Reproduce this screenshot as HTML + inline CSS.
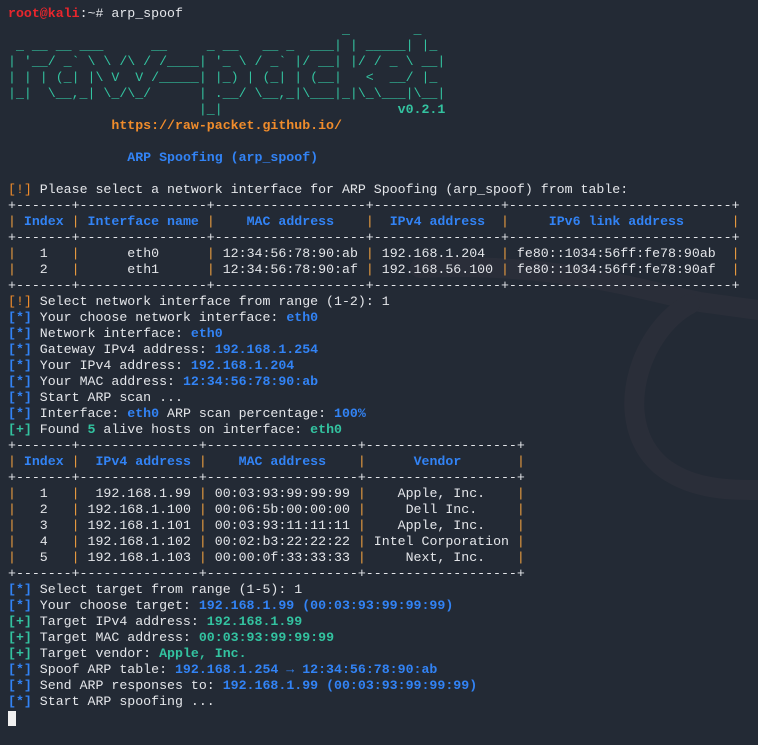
<!DOCTYPE html>
<html><head><meta charset="utf-8"><style>
html,body{margin:0;padding:0;background:#232a35;width:758px;height:745px;overflow:hidden}
svg.bg{position:absolute;left:0;top:0}
pre{position:absolute;left:8px;top:6px;margin:0;font-family:"Liberation Mono",monospace;font-size:13.25px;line-height:16px;color:#e4e6ea;white-space:pre}
.r{color:#e8262d;font-weight:bold}
.b{color:#3283f5;font-weight:bold}
.g{color:#33c3a0;font-weight:bold}
.t{color:#33c3a0}
.o{color:#f08c2b;font-weight:bold}
.ob{color:#f08c2b}
.p{color:#f0a040}
.cur{position:absolute;left:8px;top:711px;width:8px;height:15px;background:#f0f0f0}
</style></head><body>
<svg class="bg" width="758" height="745"><g fill="none" stroke="#2a2e39" stroke-width="20" stroke-linecap="round">
<path d="M 420 268 C 560 262, 640 290, 700 302 L 758 310"/>
<path d="M 690 304 C 640 330, 610 420, 660 465 C 690 490, 730 490, 758 490"/>
</g></svg>
<pre><span class="r">root@kali</span>:~# arp_spoof
<span class="t">                                          _        _
 _ __ __ ___      __     _ __   __ _  ___| | _____| |_
| '__/ _` \ \ /\ / /____| '_ \ / _` |/ __| |/ / _ \ __|
| | | (_| |\ V  V /_____| |_) | (_| | (__|   &lt;  __/ |_
|_|  \__,_| \_/\_/      | .__/ \__,_|\___|_|\_\___|\__|
                        |_|                      </span><span class="g">v0.2.1</span>
             <span class="o">https://raw-packet.github.io/</span>

               <span class="b">ARP Spoofing (arp_spoof)</span>

<span class="ob">[!]</span> Please select a network interface for ARP Spoofing (arp_spoof) from table:
+-------+----------------+-------------------+----------------+----------------------------+
<span class="p">|</span> <span class="b">Index</span> <span class="p">|</span> <span class="b">Interface name</span> <span class="p">|</span>    <span class="b">MAC address</span>    <span class="p">|</span>  <span class="b">IPv4 address</span>  <span class="p">|</span>     <span class="b">IPv6 link address</span>      <span class="p">|</span>
+-------+----------------+-------------------+----------------+----------------------------+
<span class="p">|</span>   1   <span class="p">|</span>      eth0      <span class="p">|</span> 12:34:56:78:90:ab <span class="p">|</span> 192.168.1.204  <span class="p">|</span> fe80::1034:56ff:fe78:90ab  <span class="p">|</span>
<span class="p">|</span>   2   <span class="p">|</span>      eth1      <span class="p">|</span> 12:34:56:78:90:af <span class="p">|</span> 192.168.56.100 <span class="p">|</span> fe80::1034:56ff:fe78:90af  <span class="p">|</span>
+-------+----------------+-------------------+----------------+----------------------------+
<span class="ob">[!]</span> Select network interface from range (1-2): 1
<span class="b">[*]</span> Your choose network interface: <span class="b">eth0</span>
<span class="b">[*]</span> Network interface: <span class="b">eth0</span>
<span class="b">[*]</span> Gateway IPv4 address: <span class="b">192.168.1.254</span>
<span class="b">[*]</span> Your IPv4 address: <span class="b">192.168.1.204</span>
<span class="b">[*]</span> Your MAC address: <span class="b">12:34:56:78:90:ab</span>
<span class="b">[*]</span> Start ARP scan ...
<span class="b">[*]</span> Interface: <span class="b">eth0</span> ARP scan percentage: <span class="b">100%</span>
<span class="g">[+]</span> Found <span class="g">5</span> alive hosts on interface: <span class="g">eth0</span>
+-------+---------------+-------------------+-------------------+
<span class="p">|</span> <span class="b">Index</span> <span class="p">|</span>  <span class="b">IPv4 address</span> <span class="p">|</span>    <span class="b">MAC address</span>    <span class="p">|</span>      <span class="b">Vendor</span>       <span class="p">|</span>
+-------+---------------+-------------------+-------------------+
<span class="p">|</span>   1   <span class="p">|</span>  192.168.1.99 <span class="p">|</span> 00:03:93:99:99:99 <span class="p">|</span>    Apple, Inc.    <span class="p">|</span>
<span class="p">|</span>   2   <span class="p">|</span> 192.168.1.100 <span class="p">|</span> 00:06:5b:00:00:00 <span class="p">|</span>     Dell Inc.     <span class="p">|</span>
<span class="p">|</span>   3   <span class="p">|</span> 192.168.1.101 <span class="p">|</span> 00:03:93:11:11:11 <span class="p">|</span>    Apple, Inc.    <span class="p">|</span>
<span class="p">|</span>   4   <span class="p">|</span> 192.168.1.102 <span class="p">|</span> 00:02:b3:22:22:22 <span class="p">|</span> Intel Corporation <span class="p">|</span>
<span class="p">|</span>   5   <span class="p">|</span> 192.168.1.103 <span class="p">|</span> 00:00:0f:33:33:33 <span class="p">|</span>     Next, Inc.    <span class="p">|</span>
+-------+---------------+-------------------+-------------------+
<span class="b">[*]</span> Select target from range (1-5): 1
<span class="b">[*]</span> Your choose target: <span class="b">192.168.1.99 (00:03:93:99:99:99)</span>
<span class="g">[+]</span> Target IPv4 address: <span class="g">192.168.1.99</span>
<span class="g">[+]</span> Target MAC address: <span class="g">00:03:93:99:99:99</span>
<span class="g">[+]</span> Target vendor: <span class="g">Apple, Inc.</span>
<span class="b">[*]</span> Spoof ARP table: <span class="b">192.168.1.254 → 12:34:56:78:90:ab</span>
<span class="b">[*]</span> Send ARP responses to: <span class="b">192.168.1.99 (00:03:93:99:99:99)</span>
<span class="b">[*]</span> Start ARP spoofing ...
</pre>
<div class="cur"></div>
</body></html>
